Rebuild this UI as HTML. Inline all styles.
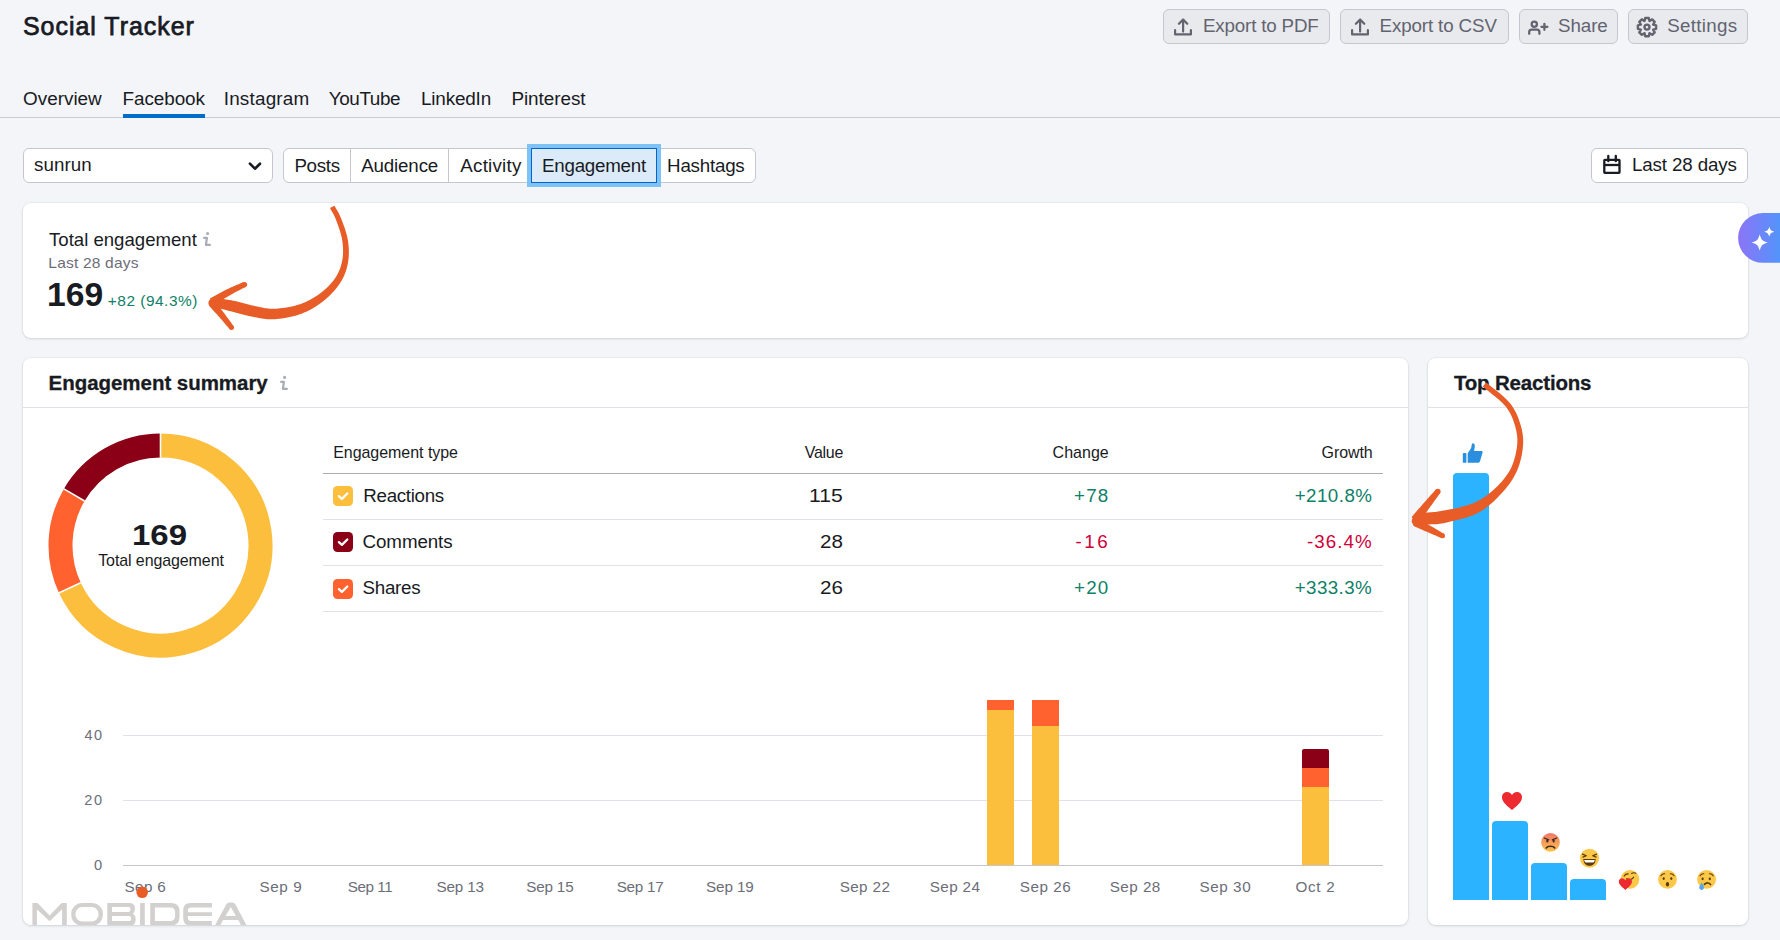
<!DOCTYPE html>
<html><head><meta charset="utf-8"><title>Social Tracker</title>
<style>
html,body{margin:0;padding:0}
body{width:1780px;height:940px;overflow:hidden;background:#f4f5f9;font-family:"Liberation Sans",sans-serif;position:relative}
.t{position:absolute;white-space:nowrap}
.box{position:absolute;box-sizing:border-box;display:block}
svg.ab{position:absolute;left:0;top:0;overflow:visible}
</style></head><body>
<div class="box" style="left:1163px;top:9px;width:167px;height:35px;background:#e9eaee;border:1px solid #c4c7cf;border-radius:6px"></div>
<div class="box" style="left:1340px;top:9px;width:169px;height:35px;background:#e9eaee;border:1px solid #c4c7cf;border-radius:6px"></div>
<div class="box" style="left:1519px;top:9px;width:99px;height:35px;background:#e9eaee;border:1px solid #c4c7cf;border-radius:6px"></div>
<div class="box" style="left:1628px;top:9px;width:120px;height:35px;background:#e9eaee;border:1px solid #c4c7cf;border-radius:6px"></div>
<div class="box" style="left:0px;top:117px;width:1780px;height:1px;background:#c9cbd3"></div>
<div class="box" style="left:123px;top:114px;width:82px;height:4px;background:#006dca"></div>
<div class="box" style="left:23px;top:148px;width:250px;height:35px;background:#fff;border:1px solid #c4c7cf;border-radius:6px"></div>
<div class="box" style="left:283px;top:148px;width:473px;height:35px;background:#fff;border:1px solid #c4c7cf;border-radius:6px"></div>
<div class="box" style="left:350px;top:148px;width:1px;height:35px;background:#c4c7cf"></div>
<div class="box" style="left:448px;top:148px;width:1px;height:35px;background:#c4c7cf"></div>
<div class="box" style="left:527px;top:144px;width:134px;height:43px;background:#7fc3f6"></div>
<div class="box" style="left:531px;top:148px;width:126px;height:35px;background:#dcebfa;border:1px solid #0067cc"></div>
<div class="box" style="left:1591px;top:148px;width:157px;height:35px;background:#fff;border:1px solid #c4c7cf;border-radius:6px"></div>
<div class="box" style="left:23px;top:203px;width:1725px;height:135px;background:#fff;border-radius:8px;box-shadow:0 0 0 1px rgba(25,27,35,0.03),0 1px 3px rgba(25,27,35,0.12)"></div>
<div class="box" style="left:23px;top:358px;width:1385px;height:567px;background:#fff;border-radius:8px;box-shadow:0 0 0 1px rgba(25,27,35,0.03),0 1px 3px rgba(25,27,35,0.12)"></div>
<div class="box" style="left:1428px;top:358px;width:320px;height:567px;background:#fff;border-radius:8px;box-shadow:0 0 0 1px rgba(25,27,35,0.03),0 1px 3px rgba(25,27,35,0.12)"></div>
<div class="box" style="left:23px;top:407px;width:1385px;height:1px;background:#e0e1e9"></div>
<div class="box" style="left:1428px;top:407px;width:320px;height:1px;background:#e0e1e9"></div>
<div class="box" style="left:323px;top:473px;width:1060px;height:1px;background:#a9abb6"></div>
<div class="box" style="left:323px;top:519px;width:1060px;height:1px;background:#e0e1e9"></div>
<div class="box" style="left:323px;top:565px;width:1060px;height:1px;background:#e0e1e9"></div>
<div class="box" style="left:323px;top:611px;width:1060px;height:1px;background:#e0e1e9"></div>
<svg class="box" style="left:333px;top:486px" width="20" height="20" viewBox="0 0 20 20"><rect x="0" y="0" width="20" height="20" rx="4.5" fill="#fcbf3d"/><path d="M5.9 10.1 L8.9 12.9 L14.3 7.5" fill="none" stroke="#fff" stroke-width="2.3" stroke-linecap="round" stroke-linejoin="round"/></svg>
<svg class="box" style="left:333px;top:532px" width="20" height="20" viewBox="0 0 20 20"><rect x="0" y="0" width="20" height="20" rx="4.5" fill="#8b0016"/><path d="M5.9 10.1 L8.9 12.9 L14.3 7.5" fill="none" stroke="#fff" stroke-width="2.3" stroke-linecap="round" stroke-linejoin="round"/></svg>
<svg class="box" style="left:333px;top:579px" width="20" height="20" viewBox="0 0 20 20"><rect x="0" y="0" width="20" height="20" rx="4.5" fill="#ff622e"/><path d="M5.9 10.1 L8.9 12.9 L14.3 7.5" fill="none" stroke="#fff" stroke-width="2.3" stroke-linecap="round" stroke-linejoin="round"/></svg>
<div class="box" style="left:123px;top:735px;width:1260px;height:1px;background:#e0e1e9"></div>
<div class="box" style="left:123px;top:800px;width:1260px;height:1px;background:#e0e1e9"></div>
<div class="box" style="left:123px;top:864.5px;width:1260px;height:1.5px;background:#c4c7cf"></div>
<div class="box" style="left:987px;top:700px;width:27px;height:10px;background:#ff622e;"></div>
<div class="box" style="left:987px;top:710px;width:27px;height:155px;background:#fcbf3d;"></div>
<div class="box" style="left:1032px;top:700px;width:27px;height:26px;background:#ff622e;"></div>
<div class="box" style="left:1032px;top:726px;width:27px;height:139px;background:#fcbf3d;"></div>
<div class="box" style="left:1302px;top:749px;width:27px;height:19px;background:#8b0016;border-radius:2px 2px 0 0;"></div>
<div class="box" style="left:1302px;top:768px;width:27px;height:19px;background:#ff622e;"></div>
<div class="box" style="left:1302px;top:787px;width:27px;height:78px;background:#fcbf3d;"></div>
<div class="box" style="left:1453px;top:473px;width:36px;height:427px;background:#2bb3ff;border-radius:4px 4px 0 0"></div>
<div class="box" style="left:1492px;top:821px;width:36px;height:79px;background:#2bb3ff;border-radius:4px 4px 0 0"></div>
<div class="box" style="left:1531px;top:863px;width:36px;height:37px;background:#2bb3ff;border-radius:4px 4px 0 0"></div>
<div class="box" style="left:1570px;top:879px;width:36px;height:21px;background:#2bb3ff;border-radius:4px 4px 0 0"></div>
<svg class="ab" width="1780" height="940" viewBox="0 0 1780 940">
  <!-- upload icons -->
  <g fill="none" stroke="#62646f" stroke-width="2.2" stroke-linecap="round" stroke-linejoin="round">
    <g transform="translate(1174,18)"><path d="M1.1 12.2V16.4H16.9V12.2"/><path d="M9.1 13.6V1.8"/><path d="M4.9 5.8L9.1 1.6L13.3 5.8"/></g>
    <g transform="translate(1351,18)"><path d="M1.1 12.2V16.4H16.9V12.2"/><path d="M9.1 13.6V1.8"/><path d="M4.9 5.8L9.1 1.6L13.3 5.8"/></g>
    <!-- share person plus -->
    <g transform="translate(1528,19)" stroke-width="2.3"><circle cx="6.3" cy="5.3" r="2.6"/><path d="M1.2 14.8V13.2Q1.2 10.7 3.7 10.7H8.9Q11.4 10.7 11.4 13.2V14.8"/><path d="M16.4 4.8V10.8M13.4 7.8H19.4"/></g>
    <!-- calendar -->
    <g transform="translate(1603,155)" stroke="#191b23" stroke-width="2.3" stroke-linecap="butt" stroke-linejoin="miter"><rect x="1.3" y="4.8" width="15.2" height="13.1" rx="0.6"/><path d="M1.3 10H16.5"/><path d="M5.3 1V6.2M12.8 1V6.2" stroke-linecap="round"/></g>
    <!-- chevron -->
    <path d="M249.9 163.7L254.9 168.7L260 163.7" stroke="#191b23" stroke-width="2.6" stroke-linecap="round" stroke-linejoin="round" fill="none"/>
  </g>
  <!-- gear -->
  <g transform="translate(1647,27.1)" fill="none" stroke="#62646f" stroke-width="2.4" stroke-linejoin="round"><path d="M-2.47 -6.12 L-1.77 -9.13 L1.77 -9.13 L2.47 -6.12 L2.58 -6.08 L5.20 -7.71 L7.71 -5.20 L6.08 -2.58 L6.12 -2.47 L9.13 -1.77 L9.13 1.77 L6.12 2.47 L6.08 2.58 L7.71 5.20 L5.20 7.71 L2.58 6.08 L2.47 6.12 L1.77 9.13 L-1.77 9.13 L-2.47 6.12 L-2.58 6.08 L-5.20 7.71 L-7.71 5.20 L-6.08 2.58 L-6.12 2.47 L-9.13 1.77 L-9.13 -1.77 L-6.12 -2.47 L-6.08 -2.58 L-7.71 -5.20 L-5.20 -7.71 L-2.58 -6.08Z"/><circle cx="0" cy="0" r="2.5"/></g>
  <!-- info icons -->
  <g fill="#a9abb6" stroke="none"><circle cx="207.6" cy="233.5" r="1.55"/><circle cx="284.6" cy="377.4" r="1.55"/></g>
  <g fill="none" stroke="#a9abb6" stroke-width="2.2" stroke-linecap="round" stroke-linejoin="round">
    <path d="M204.1 237.9H206.9L205.9 244.9H209.9"/>
    <path d="M281.1 381.8H283.9L282.9 388.8H286.9"/>
  </g>
  <path d="M160.50 445.50A100.0 100.0 0 1 1 69.89 587.81" fill="none" stroke="#fcbf3d" stroke-width="24"/>
<path d="M69.89 587.81A100.0 100.0 0 0 1 74.21 494.96" fill="none" stroke="#ff622e" stroke-width="24"/>
<path d="M74.21 494.96A100.0 100.0 0 0 1 160.50 445.50" fill="none" stroke="#8b0016" stroke-width="24"/>
<line x1="160.50" y1="457.50" x2="160.50" y2="432.50" stroke="#fff" stroke-width="1.6"/>
<line x1="80.76" y1="582.73" x2="58.11" y2="593.31" stroke="#fff" stroke-width="1.6"/>
<line x1="84.56" y1="501.03" x2="62.99" y2="488.39" stroke="#fff" stroke-width="1.6"/>
<g transform="translate(1462.5,443)" fill="#2a8fdf"><rect x="0.3" y="10" width="3.6" height="9.8" rx="0.9"/><path d="M5.2 10.2C6.8 7.6 8.6 5.8 9 3.4C9.2 1.9 9.3 0.2 10.6 0.2C12.1 0.3 12.6 2.2 12.2 4.2L11.6 8.1H19C19.9 8.1 20.3 8.8 20.1 9.6L17.6 17.9C17.2 19.1 16.3 19.8 14.9 19.8H5.2Z"/></g>
<path transform="translate(1502,792)" d="M10 18C6.2 14.6 0 10.4 0 5.2C0 2.2 2.2 0 5 0C7.2 0 8.8 1.2 10 3C11.2 1.2 12.8 0 15 0C17.8 0 20 2.2 20 5.2C20 10.4 13.8 14.6 10 18Z" fill="#ec2a2f"/>
<defs>
<linearGradient id="ang" x1="0" y1="0" x2="0" y2="1"><stop offset="0" stop-color="#f2766a"/><stop offset="1" stop-color="#fcc24a"/></linearGradient>
<linearGradient id="spk" gradientUnits="userSpaceOnUse" x1="1738" y1="0" x2="1780" y2="0"><stop offset="0" stop-color="#8c74f6"/><stop offset="1" stop-color="#5394fb"/></linearGradient>
</defs>
<g transform="translate(1550.5,842.4)"><circle r="9.3" fill="url(#ang)"/><path d="M-6.2 -4.4L-1.8 -2.6M6.2 -4.4L1.8 -2.6" stroke="#3a2a1a" stroke-width="1.3" stroke-linecap="round"/><ellipse cx="-3.2" cy="-1.4" rx="1.1" ry="1.5" fill="#3a2a1a"/><ellipse cx="3.2" cy="-1.4" rx="1.1" ry="1.5" fill="#3a2a1a"/><path d="M-4.3 5.6C-2.8 3.2 2.8 3.2 4.3 5.6" fill="none" stroke="#3a2a1a" stroke-width="1.5" stroke-linecap="round"/></g>
<g transform="translate(1589.5,858.3)"><circle r="9.5" fill="#fcc84a"/><path d="M-7 -4.2L-3.2 -2.6L-6.6 -1.2M7 -4.2L3.2 -2.6L6.6 -1.2" fill="none" stroke="#5a3a08" stroke-width="1.2" stroke-linecap="round" stroke-linejoin="round"/><path d="M-6.2 0.6C-5.8 5.8 -3 7.4 0 7.4C3 7.4 5.8 5.8 6.2 0.6Z" fill="#5a3a08"/><path d="M-5.3 1.6H5.3C5 3 4.4 3.8 3.6 4.2H-3.6C-4.4 3.8 -5 3 -5.3 1.6Z" fill="#fff"/></g>
<g transform="translate(1630,879.4)"><circle r="9.3" fill="#fcc84a"/><path d="M-5.8 -3.4C-4.8 -5 -3.2 -5.6 -1.8 -5.4M1.6 -6C3 -6.8 4.6 -6.8 5.8 -6.2M-3.4 -0.6C-1.2 0.8 2 0.4 3.6 -2.2" fill="none" stroke="#5a3a08" stroke-width="1.2" stroke-linecap="round"/><path d="M-4.6 10.6C-7.2 8.3 -11.2 5.6 -11.2 2.2C-11.2 0.2 -9.8 -1.2 -8 -1.2C-6.6 -1.2 -5.4 -0.4 -4.6 0.8C-3.8 -0.4 -2.6 -1.2 -1.2 -1.2C0.6 -1.2 2 0.2 2 2.2C2 5.6 -2 8.3 -4.6 10.6Z" fill="#ec2a2f"/></g>
<g transform="translate(1667.5,879.4)"><circle r="9.4" fill="#fcc84a"/><path d="M-6.6 -3.6C-5.6 -5.2 -4.2 -5.8 -2.8 -5.6M6.6 -3.6C5.6 -5.2 4.2 -5.8 2.8 -5.6" fill="none" stroke="#5a3a08" stroke-width="1.1" stroke-linecap="round"/><ellipse cx="-3.8" cy="-0.8" rx="1.1" ry="1.4" fill="#5a3a08"/><ellipse cx="3.8" cy="-0.8" rx="1.1" ry="1.4" fill="#5a3a08"/><ellipse cx="0" cy="4.8" rx="1.6" ry="2.2" fill="#5a3a08"/></g>
<g transform="translate(1706.6,879.4)"><circle r="9.4" fill="#fcc84a"/><path d="M-6.6 -3.6C-5.6 -5.2 -4.2 -5.8 -2.8 -5.6M6.6 -3.6C5.6 -5.2 4.2 -5.8 2.8 -5.6" fill="none" stroke="#5a3a08" stroke-width="1.1" stroke-linecap="round"/><ellipse cx="-4" cy="-0.6" rx="1.1" ry="1.4" fill="#5a3a08"/><ellipse cx="3.2" cy="-0.6" rx="1.1" ry="1.4" fill="#5a3a08"/><path d="M-2.2 5C-0.4 3 2.6 3 4 5.2" fill="none" stroke="#5a3a08" stroke-width="1.6" stroke-linecap="round"/><path d="M-4.8 3.2C-5.6 5 -7.4 6.4 -7.4 8.2C-7.4 9.6 -6.2 10.6 -5 10.6C-3.6 10.6 -2.6 9.6 -2.6 8.2C-2.6 6.4 -4 5 -4.8 3.2Z" fill="#5aa6ea"/></g>
<path d="M1763 213H1790V262.8H1763A24.9 24.9 0 0 1 1763 213Z" fill="url(#spk)"/>
<path d="M1759.7 234.4C1761.806 240.394 1761.806 240.394 1767.8 242.5C1761.806 244.606 1761.806 244.606 1759.7 250.6C1757.594 244.606 1757.594 244.606 1751.6000000000001 242.5C1757.594 240.394 1757.594 240.394 1759.7 234.4Z" fill="#fff"/>
<path d="M1769.3 226.8C1770.6 230.5 1770.6 230.5 1774.3 231.8C1770.6 233.10000000000002 1770.6 233.10000000000002 1769.3 236.8C1768.0 233.10000000000002 1768.0 233.10000000000002 1764.3 231.8C1768.0 230.5 1768.0 230.5 1769.3 226.8Z" fill="#fff"/>
</svg>
<div class="t" style="left:23.00px;top:14.40px;font-size:24.93px;line-height:24.93px;font-weight:400;color:#191b23;letter-spacing:1.0px;-webkit-text-stroke:0.75px #191b23">Social Tracker</div>
<div class="t" style="left:23.00px;top:90.00px;font-size:18.9px;line-height:18.9px;font-weight:400;color:#191b23;letter-spacing:0.0px">Overview</div>
<div class="t" style="left:122.50px;top:90.00px;font-size:18.9px;line-height:18.9px;font-weight:400;color:#191b23;letter-spacing:-0.071px">Facebook</div>
<div class="t" style="left:223.70px;top:90.00px;font-size:18.9px;line-height:18.9px;font-weight:400;color:#191b23;letter-spacing:0.2px">Instagram</div>
<div class="t" style="left:328.70px;top:90.00px;font-size:18.9px;line-height:18.9px;font-weight:400;color:#191b23;letter-spacing:-0.383px">YouTube</div>
<div class="t" style="left:420.90px;top:90.00px;font-size:18.9px;line-height:18.9px;font-weight:400;color:#191b23;letter-spacing:-0.157px">LinkedIn</div>
<div class="t" style="left:511.40px;top:90.00px;font-size:18.9px;line-height:18.9px;font-weight:400;color:#191b23;letter-spacing:-0.05px">Pinterest</div>
<div class="t" style="left:1203.00px;top:17.00px;font-size:18.75px;line-height:18.75px;font-weight:400;color:#62646f;letter-spacing:-0.167px">Export to PDF</div>
<div class="t" style="left:1379.50px;top:17.00px;font-size:18.75px;line-height:18.75px;font-weight:400;color:#62646f;letter-spacing:-0.117px">Export to CSV</div>
<div class="t" style="left:1558.00px;top:17.00px;font-size:18.75px;line-height:18.75px;font-weight:400;color:#62646f;letter-spacing:-0.075px">Share</div>
<div class="t" style="left:1667.30px;top:17.00px;font-size:18.75px;line-height:18.75px;font-weight:400;color:#62646f;letter-spacing:0.3px">Settings</div>
<div class="t" style="left:34.00px;top:156.00px;font-size:18.75px;line-height:18.75px;font-weight:400;color:#191b23;letter-spacing:0.06px">sunrun</div>
<div class="t" style="left:294.40px;top:157.00px;font-size:18.75px;line-height:18.75px;font-weight:400;color:#191b23;letter-spacing:-0.3px">Posts</div>
<div class="t" style="left:361.20px;top:157.00px;font-size:18.75px;line-height:18.75px;font-weight:400;color:#191b23;letter-spacing:-0.157px">Audience</div>
<div class="t" style="left:460.30px;top:157.00px;font-size:18.75px;line-height:18.75px;font-weight:400;color:#191b23;letter-spacing:0.229px">Activity</div>
<div class="t" style="left:542.00px;top:157.00px;font-size:18.75px;line-height:18.75px;font-weight:400;color:#191b23;letter-spacing:-0.244px">Engagement</div>
<div class="t" style="left:667.10px;top:157.00px;font-size:18.75px;line-height:18.75px;font-weight:400;color:#191b23;letter-spacing:-0.229px">Hashtags</div>
<div class="t" style="left:1632.00px;top:156.00px;font-size:18.75px;line-height:18.75px;font-weight:400;color:#191b23;letter-spacing:-0.136px">Last 28 days</div>
<div class="t" style="left:49.00px;top:231.00px;font-size:18.6px;line-height:18.6px;font-weight:400;color:#191b23;letter-spacing:0.0px">Total engagement</div>
<div class="t" style="left:48.30px;top:255.00px;font-size:15.55px;line-height:15.55px;font-weight:400;color:#6c6e79;letter-spacing:0.182px">Last 28 days</div>
<div class="t" style="left:46.94px;top:279.00px;font-size:32.7px;line-height:32.7px;font-weight:700;color:#191b23;letter-spacing:0px;transform:scaleX(1.0294);transform-origin:0 0">169</div>
<div class="t" style="left:107.80px;top:292.60px;font-size:15.41px;line-height:15.41px;font-weight:400;color:#0e8068;letter-spacing:0.52px">+82 (94.3%)</div>
<div class="t" style="left:48.60px;top:373.00px;font-size:20.49px;line-height:20.49px;font-weight:700;color:#191b23;letter-spacing:-0.035px;-webkit-text-stroke:0.3px #191b23">Engagement summary</div>
<div class="t" style="left:1453.90px;top:373.00px;font-size:20.49px;line-height:20.49px;font-weight:700;color:#191b23;letter-spacing:-0.167px;-webkit-text-stroke:0.3px #191b23">Top Reactions</div>
<div class="t" style="left:132.27px;top:520.00px;font-size:29.65px;line-height:29.65px;font-weight:700;color:#191b23;letter-spacing:0px;transform:scaleX(1.1128);transform-origin:0 0">169</div>
<div class="t" style="left:98.20px;top:553.20px;font-size:15.99px;line-height:15.99px;font-weight:400;color:#191b23;letter-spacing:-0.093px">Total engagement</div>
<div class="t" style="left:333.20px;top:445.00px;font-size:15.99px;line-height:15.99px;font-weight:400;color:#191b23;letter-spacing:-0.036px">Engagement type</div>
<div class="t" style="left:804.70px;top:445.00px;font-size:15.99px;line-height:15.99px;font-weight:400;color:#191b23;letter-spacing:-0.25px">Value</div>
<div class="t" style="left:1052.60px;top:445.00px;font-size:15.99px;line-height:15.99px;font-weight:400;color:#191b23;letter-spacing:0.02px">Change</div>
<div class="t" style="left:1321.60px;top:445.00px;font-size:15.99px;line-height:15.99px;font-weight:400;color:#191b23;letter-spacing:-0.08px">Growth</div>
<div class="t" style="left:363.30px;top:486.60px;font-size:18.75px;line-height:18.75px;font-weight:400;color:#191b23;letter-spacing:-0.312px">Reactions</div>
<div class="t" style="left:809.38px;top:486.60px;font-size:18.75px;line-height:18.75px;font-weight:400;color:#191b23;letter-spacing:0px;transform:scaleX(1.1250);transform-origin:0 0">115</div>
<div class="t" style="left:1073.90px;top:486.60px;font-size:18.75px;line-height:18.75px;font-weight:400;color:#0e8068;letter-spacing:1.3px">+78</div>
<div class="t" style="left:1294.70px;top:486.60px;font-size:18.75px;line-height:18.75px;font-weight:400;color:#0e8068;letter-spacing:0.45px">+210.8%</div>
<div class="t" style="left:362.60px;top:532.60px;font-size:18.75px;line-height:18.75px;font-weight:400;color:#191b23;letter-spacing:-0.1px">Comments</div>
<div class="t" style="left:820.20px;top:532.60px;font-size:18.75px;line-height:18.75px;font-weight:400;color:#191b23;letter-spacing:0px;transform:scaleX(1.1000);transform-origin:0 0">28</div>
<div class="t" style="left:1075.60px;top:532.60px;font-size:18.75px;line-height:18.75px;font-weight:400;color:#d1003a;letter-spacing:2.45px">-16</div>
<div class="t" style="left:1307.10px;top:532.60px;font-size:18.75px;line-height:18.75px;font-weight:400;color:#d1003a;letter-spacing:1.02px">-36.4%</div>
<div class="t" style="left:362.60px;top:578.60px;font-size:18.75px;line-height:18.75px;font-weight:400;color:#191b23;letter-spacing:-0.28px">Shares</div>
<div class="t" style="left:820.20px;top:578.60px;font-size:18.75px;line-height:18.75px;font-weight:400;color:#191b23;letter-spacing:0px;transform:scaleX(1.1000);transform-origin:0 0">26</div>
<div class="t" style="left:1073.90px;top:578.60px;font-size:18.75px;line-height:18.75px;font-weight:400;color:#0e8068;letter-spacing:1.3px">+20</div>
<div class="t" style="left:1294.70px;top:578.60px;font-size:18.75px;line-height:18.75px;font-weight:400;color:#0e8068;letter-spacing:0.417px">+333.3%</div>
<div class="t" style="left:84.60px;top:728.30px;font-size:14.53px;line-height:14.53px;font-weight:400;color:#6c6e79;letter-spacing:1.4px">40</div>
<div class="t" style="left:84.20px;top:793.00px;font-size:14.53px;line-height:14.53px;font-weight:400;color:#6c6e79;letter-spacing:1.8px">20</div>
<div class="t" style="left:93.90px;top:857.50px;font-size:14.53px;line-height:14.53px;font-weight:400;color:#6c6e79;letter-spacing:0px;transform:scaleX(1.0125);transform-origin:0 0">0</div>
<div class="t" style="left:124.60px;top:879.00px;font-size:15.26px;line-height:15.26px;font-weight:400;color:#6c6e79;letter-spacing:0.35px">Sep 6</div>
<div class="t" style="left:259.40px;top:879.00px;font-size:15.26px;line-height:15.26px;font-weight:400;color:#6c6e79;letter-spacing:0.6px">Sep 9</div>
<div class="t" style="left:347.70px;top:879.00px;font-size:15.26px;line-height:15.26px;font-weight:400;color:#6c6e79;letter-spacing:-0.44px">Sep 11</div>
<div class="t" style="left:436.40px;top:879.00px;font-size:15.26px;line-height:15.26px;font-weight:400;color:#6c6e79;letter-spacing:-0.14px">Sep 13</div>
<div class="t" style="left:526.20px;top:879.00px;font-size:15.26px;line-height:15.26px;font-weight:400;color:#6c6e79;letter-spacing:-0.18px">Sep 15</div>
<div class="t" style="left:616.70px;top:879.00px;font-size:15.26px;line-height:15.26px;font-weight:400;color:#6c6e79;letter-spacing:-0.24px">Sep 17</div>
<div class="t" style="left:706.00px;top:879.00px;font-size:15.26px;line-height:15.26px;font-weight:400;color:#6c6e79;letter-spacing:-0.12px">Sep 19</div>
<div class="t" style="left:839.70px;top:879.00px;font-size:15.26px;line-height:15.26px;font-weight:400;color:#6c6e79;letter-spacing:0.38px">Sep 22</div>
<div class="t" style="left:929.80px;top:879.00px;font-size:15.26px;line-height:15.26px;font-weight:400;color:#6c6e79;letter-spacing:0.36px">Sep 24</div>
<div class="t" style="left:1019.80px;top:879.00px;font-size:15.26px;line-height:15.26px;font-weight:400;color:#6c6e79;letter-spacing:0.5px">Sep 26</div>
<div class="t" style="left:1109.70px;top:879.00px;font-size:15.26px;line-height:15.26px;font-weight:400;color:#6c6e79;letter-spacing:0.46px">Sep 28</div>
<div class="t" style="left:1199.40px;top:879.00px;font-size:15.26px;line-height:15.26px;font-weight:400;color:#6c6e79;letter-spacing:0.58px">Sep 30</div>
<div class="t" style="left:1295.50px;top:879.00px;font-size:15.26px;line-height:15.26px;font-weight:400;color:#6c6e79;letter-spacing:0.675px">Oct 2</div>
<svg class="ab" width="1780" height="940" viewBox="0 0 1780 940"><clipPath id="wmclip"><rect x="0" y="880" width="400" height="45.3"/></clipPath>
<g fill="#d3d1cf" fill-rule="evenodd" clip-path="url(#wmclip)">
<path d="M32.4 925.5V903.1H37.6L49.6 915.6L61.6 903.1H66.8V925.5H62.1V909.3L49.6 921.3L36.9 909.3V925.5Z"/>
<path d="M81.7 903.1H92.4A10.5 10.5 0 0 1 102.9 913.6V915A10.5 10.5 0 0 1 92.4 925.5H81.7A10.5 10.5 0 0 1 71.2 915V913.6A10.5 10.5 0 0 1 81.7 903.1ZM82.1 907H91.9A6.6 6.6 0 0 1 98.5 913.6V914.8A6.6 6.6 0 0 1 91.9 921.4H82.1A6.6 6.6 0 0 1 75.5 914.8V913.6A6.6 6.6 0 0 1 82.1 907Z"/>
<path d="M107.3 903.1H129.4Q134.9 903.1 134.9 908.4V909.2Q134.9 912 132.9 913.8Q135.6 915.4 135.6 918.6V919.9Q135.6 925.5 130.1 925.5H107.3ZM112 907.1H128.9Q130.5 907.1 130.5 909.3Q130.5 911.9 128.9 911.9H112ZM112 915.9H129.4Q131.2 915.9 131.2 918.4Q131.2 921 129.4 921H112Z"/>
<rect x="140.1" y="903.1" width="4.7" height="22.4"/>
<path d="M150.2 903.1H171.2Q179.5 903.1 179.5 911.4V917.2Q179.5 925.5 171.2 925.5H150.2ZM154.9 907.5H170.3Q175.1 907.5 175.1 912.3V916.2Q175.1 921 170.3 921H154.9Z"/>
<path d="M211.9 903.1H190.4Q183.2 903.1 183.2 910.3V918.3Q183.2 925.5 190.4 925.5H211.9V921H191.2Q187.9 921 187.9 917.7V915.9H211.9V912.2H187.9V910.8Q187.9 907.5 191.2 907.5H211.9Z"/>
<path d="M214.9 925.5L226.2 904.6Q227.2 902.6 229.5 902.6H232.2Q234.5 902.6 235.5 904.6L246.6 925.5H241.2L238.3 920H223L220.2 925.5ZM225.5 915.9H235.9L230.8 907.1Z"/>
</g>
<path fill="#e85d27" d="M329.99 207.97 L330.52 208.98 L331.06 209.97 L331.58 210.91 L332.10 211.82 L332.61 212.71 L333.12 213.60 L333.61 214.51 L334.10 215.46 L334.59 216.45 L335.08 217.52 L335.58 218.67 L336.08 219.95 L336.61 221.38 L337.18 222.92 L337.77 224.55 L338.38 226.25 L338.98 228.00 L339.57 229.80 L340.13 231.61 L340.67 233.44 L341.15 235.25 L341.59 237.03 L341.95 238.77 L342.24 240.46 L342.47 242.14 L342.67 243.85 L342.83 245.56 L342.95 247.27 L343.02 248.97 L343.06 250.67 L343.04 252.36 L342.98 254.03 L342.88 255.68 L342.72 257.31 L342.51 258.91 L342.24 260.49 L341.91 262.06 L341.54 263.61 L341.13 265.15 L340.67 266.66 L340.17 268.16 L339.61 269.64 L339.01 271.10 L338.35 272.54 L337.64 273.97 L336.87 275.38 L336.04 276.78 L335.14 278.16 L334.16 279.53 L333.10 280.91 L331.97 282.30 L330.77 283.68 L329.52 285.04 L328.20 286.40 L326.84 287.73 L325.44 289.03 L324.01 290.30 L322.54 291.52 L321.06 292.71 L319.55 293.84 L318.00 294.93 L316.41 295.99 L314.79 297.03 L313.13 298.04 L311.43 299.01 L309.71 299.94 L307.96 300.83 L306.18 301.68 L304.39 302.47 L302.57 303.21 L300.74 303.90 L298.90 304.53 L297.02 305.12 L295.04 305.68 L292.99 306.20 L290.89 306.67 L288.75 307.10 L286.59 307.49 L284.44 307.82 L282.31 308.11 L280.22 308.35 L278.19 308.54 L276.25 308.67 L274.42 308.76 L272.74 308.80 L271.16 308.77 L269.64 308.69 L268.17 308.56 L266.71 308.37 L265.26 308.15 L263.79 307.89 L262.28 307.59 L260.72 307.26 L259.10 306.92 L257.40 306.56 L255.66 306.20 L253.93 305.86 L252.17 305.47 L250.36 305.04 L248.51 304.58 L246.62 304.09 L244.71 303.59 L242.78 303.07 L240.85 302.55 L238.91 302.04 L236.99 301.55 L235.09 301.07 L233.22 300.64 L231.40 300.32 L229.62 300.02 L227.87 299.74 L226.15 299.48 L224.46 299.23 L222.79 298.99 L221.13 298.76 L219.48 298.53 L217.83 298.30 L216.19 298.07 L214.54 297.83 L212.87 297.59 L211.13 306.41 L212.78 306.83 L214.42 307.23 L216.05 307.63 L217.66 308.02 L219.28 308.41 L220.89 308.81 L222.50 309.21 L224.13 309.61 L225.76 310.03 L227.41 310.46 L229.09 310.90 L230.78 311.36 L232.51 311.77 L234.30 312.21 L236.14 312.68 L238.02 313.18 L239.94 313.69 L241.88 314.21 L243.84 314.73 L245.80 315.24 L247.77 315.73 L249.72 316.20 L251.67 316.62 L253.54 317.00 L255.29 317.31 L256.96 317.62 L258.61 317.93 L260.27 318.23 L261.94 318.52 L263.64 318.78 L265.38 319.00 L267.17 319.18 L269.02 319.30 L270.94 319.36 L272.93 319.34 L274.98 319.24 L277.08 319.06 L279.25 318.82 L281.48 318.52 L283.77 318.17 L286.09 317.77 L288.43 317.31 L290.78 316.81 L293.12 316.25 L295.44 315.63 L297.72 314.97 L299.95 314.25 L302.10 313.47 L304.18 312.62 L306.22 311.71 L308.23 310.75 L310.19 309.73 L312.13 308.67 L314.02 307.56 L315.87 306.41 L317.67 305.22 L319.44 304.00 L321.15 302.75 L322.83 301.47 L324.45 300.16 L326.05 298.82 L327.63 297.43 L329.18 296.00 L330.69 294.53 L332.16 293.02 L333.58 291.48 L334.96 289.91 L336.27 288.32 L337.52 286.72 L338.71 285.10 L339.82 283.47 L340.86 281.84 L341.83 280.21 L342.72 278.56 L343.55 276.91 L344.30 275.23 L344.99 273.55 L345.61 271.86 L346.18 270.16 L346.68 268.45 L347.12 266.73 L347.52 265.00 L347.86 263.26 L348.16 261.51 L348.42 259.73 L348.62 257.92 L348.76 256.10 L348.85 254.27 L348.88 252.43 L348.86 250.58 L348.79 248.73 L348.67 246.88 L348.50 245.04 L348.30 243.20 L348.05 241.37 L347.76 239.54 L347.41 237.68 L346.97 235.76 L346.47 233.84 L345.92 231.91 L345.32 230.00 L344.70 228.10 L344.05 226.25 L343.40 224.45 L342.74 222.71 L342.11 221.06 L341.50 219.51 L340.92 218.05 L340.36 216.68 L339.79 215.40 L339.23 214.21 L338.67 213.11 L338.11 212.07 L337.56 211.10 L337.02 210.17 L336.48 209.27 L335.96 208.38 L335.44 207.50 L334.93 206.59 L334.41 205.63Z"/>
<path fill="#e85d27" d="M214.05 305.43 L215.36 304.58 L216.68 303.72 L217.98 302.85 L219.28 301.99 L220.57 301.13 L221.86 300.28 L223.15 299.43 L224.43 298.59 L225.71 297.77 L227.00 296.96 L228.28 296.18 L229.56 295.41 L230.86 294.66 L232.17 293.93 L233.49 293.22 L234.82 292.51 L236.15 291.81 L237.50 291.12 L238.85 290.43 L240.21 289.74 L241.57 289.05 L242.94 288.35 L244.31 287.64 L245.67 286.93 L243.33 282.07 L241.94 282.68 L240.55 283.28 L239.15 283.88 L237.75 284.48 L236.35 285.09 L234.94 285.69 L233.53 286.31 L232.11 286.93 L230.69 287.57 L229.27 288.23 L227.85 288.90 L226.44 289.59 L225.02 290.30 L223.61 291.03 L222.21 291.77 L220.83 292.52 L219.45 293.27 L218.07 294.04 L216.71 294.80 L215.35 295.57 L213.99 296.33 L212.64 297.08 L211.30 297.83 L209.95 298.57Z"/><path fill="#e85d27" d="M209.12 305.90 L210.00 306.87 L210.88 307.84 L211.76 308.81 L212.65 309.77 L213.53 310.74 L214.41 311.70 L215.28 312.66 L216.16 313.62 L217.02 314.58 L217.89 315.54 L218.74 316.50 L219.59 317.45 L220.43 318.41 L221.27 319.37 L222.10 320.34 L222.93 321.30 L223.76 322.27 L224.58 323.23 L225.40 324.20 L226.23 325.17 L227.05 326.14 L227.88 327.11 L228.71 328.08 L229.54 329.05 L233.46 325.95 L232.71 324.92 L231.97 323.89 L231.22 322.86 L230.48 321.83 L229.73 320.80 L228.98 319.77 L228.23 318.73 L227.48 317.70 L226.72 316.66 L225.95 315.63 L225.18 314.59 L224.41 313.55 L223.62 312.50 L222.84 311.46 L222.05 310.42 L221.25 309.38 L220.45 308.34 L219.66 307.30 L218.86 306.26 L218.06 305.23 L217.26 304.19 L216.46 303.16 L215.67 302.13 L214.88 301.10Z"/><circle cx="244.5" cy="284.5" r="2.6" fill="#e85d27"/><circle cx="231.5" cy="327.5" r="2.5" fill="#e85d27"/><circle cx="213" cy="303" r="4.6" fill="#e85d27"/>
<path fill="#e85d27" d="M1482.75 386.56 L1484.73 388.24 L1486.78 389.92 L1488.87 391.60 L1490.96 393.26 L1493.05 394.92 L1495.10 396.56 L1497.09 398.20 L1499.01 399.83 L1500.82 401.45 L1502.51 403.06 L1504.04 404.64 L1505.42 406.22 L1506.66 407.81 L1507.79 409.41 L1508.82 411.01 L1509.76 412.61 L1510.62 414.22 L1511.40 415.84 L1512.12 417.46 L1512.78 419.10 L1513.40 420.75 L1513.97 422.42 L1514.51 424.10 L1515.02 425.80 L1515.49 427.48 L1515.91 429.14 L1516.28 430.78 L1516.59 432.42 L1516.86 434.05 L1517.07 435.69 L1517.22 437.34 L1517.32 439.01 L1517.35 440.71 L1517.32 442.43 L1517.23 444.20 L1517.06 446.01 L1516.82 447.90 L1516.51 449.86 L1516.14 451.87 L1515.72 453.92 L1515.23 456.00 L1514.67 458.09 L1514.06 460.17 L1513.38 462.23 L1512.64 464.26 L1511.84 466.24 L1510.98 468.16 L1510.06 470.00 L1509.03 471.79 L1507.90 473.57 L1506.70 475.34 L1505.41 477.09 L1504.07 478.82 L1502.66 480.53 L1501.20 482.21 L1499.69 483.86 L1498.14 485.47 L1496.57 487.04 L1494.98 488.56 L1493.36 490.04 L1491.70 491.45 L1490.02 492.83 L1488.34 494.16 L1486.64 495.45 L1484.93 496.68 L1483.18 497.86 L1481.40 498.99 L1479.58 500.06 L1477.72 501.08 L1475.80 502.04 L1473.81 502.94 L1471.78 503.77 L1469.64 504.58 L1467.27 505.37 L1464.69 506.12 L1461.96 506.83 L1459.15 507.50 L1456.29 508.13 L1453.45 508.71 L1450.66 509.25 L1447.98 509.75 L1445.45 510.20 L1443.11 510.61 L1441.05 510.98 L1439.37 511.33 L1437.98 511.59 L1436.77 511.78 L1435.72 511.92 L1434.78 512.01 L1433.90 512.07 L1433.02 512.12 L1432.11 512.16 L1431.12 512.21 L1430.03 512.28 L1428.85 512.39 L1427.60 512.54 L1426.39 512.78 L1425.24 513.02 L1424.10 513.27 L1422.97 513.52 L1421.86 513.77 L1420.75 514.03 L1419.66 514.29 L1418.57 514.54 L1417.49 514.80 L1416.41 515.06 L1415.33 515.31 L1414.25 515.56 L1415.75 525.44 L1416.88 525.36 L1418.01 525.26 L1419.13 525.17 L1420.25 525.08 L1421.35 524.99 L1422.46 524.90 L1423.56 524.81 L1424.66 524.73 L1425.75 524.65 L1426.85 524.58 L1427.94 524.51 L1429.00 524.46 L1429.93 524.38 L1430.74 524.34 L1431.55 524.33 L1432.41 524.33 L1433.35 524.33 L1434.40 524.31 L1435.57 524.28 L1436.87 524.20 L1438.31 524.06 L1439.89 523.86 L1441.65 523.58 L1443.55 523.22 L1445.60 522.73 L1447.89 522.20 L1450.43 521.62 L1453.15 520.99 L1456.02 520.31 L1458.98 519.57 L1461.99 518.78 L1465.00 517.92 L1467.97 517.01 L1470.86 516.03 L1473.63 514.97 L1476.22 513.83 L1478.59 512.59 L1480.83 511.29 L1482.97 509.94 L1485.02 508.54 L1486.99 507.08 L1488.88 505.59 L1490.70 504.05 L1492.46 502.49 L1494.16 500.89 L1495.82 499.27 L1497.44 497.63 L1499.04 495.96 L1500.67 494.28 L1502.28 492.54 L1503.87 490.76 L1505.44 488.93 L1506.96 487.06 L1508.44 485.14 L1509.87 483.20 L1511.24 481.21 L1512.54 479.20 L1513.76 477.16 L1514.90 475.09 L1515.94 473.00 L1516.93 470.88 L1517.84 468.70 L1518.67 466.48 L1519.43 464.23 L1520.11 461.96 L1520.71 459.69 L1521.25 457.42 L1521.72 455.17 L1522.12 452.95 L1522.46 450.78 L1522.73 448.65 L1522.94 446.59 L1523.09 444.58 L1523.17 442.60 L1523.18 440.66 L1523.11 438.75 L1522.98 436.87 L1522.78 435.02 L1522.52 433.19 L1522.20 431.37 L1521.82 429.57 L1521.39 427.78 L1520.91 425.99 L1520.38 424.20 L1519.83 422.42 L1519.24 420.64 L1518.61 418.86 L1517.93 417.08 L1517.19 415.29 L1516.38 413.50 L1515.49 411.71 L1514.52 409.92 L1513.45 408.13 L1512.28 406.35 L1510.99 404.56 L1509.58 402.78 L1508.02 400.99 L1506.31 399.22 L1504.48 397.48 L1502.56 395.76 L1500.56 394.06 L1498.50 392.37 L1496.42 390.70 L1494.32 389.03 L1492.23 387.38 L1490.18 385.73 L1488.19 384.09 L1486.25 382.44Z"/>
<path fill="#e85d27" d="M1418.51 522.81 L1419.47 521.52 L1420.43 520.22 L1421.40 518.91 L1422.36 517.60 L1423.33 516.29 L1424.30 514.98 L1425.26 513.68 L1426.21 512.39 L1427.16 511.10 L1428.10 509.83 L1429.02 508.58 L1429.93 507.34 L1430.81 506.12 L1431.67 504.91 L1432.53 503.71 L1433.37 502.53 L1434.20 501.36 L1435.03 500.20 L1435.86 499.05 L1436.68 497.89 L1437.50 496.74 L1438.32 495.58 L1439.15 494.42 L1439.99 493.25 L1435.61 489.75 L1434.66 490.82 L1433.70 491.88 L1432.76 492.94 L1431.81 494.00 L1430.87 495.05 L1429.92 496.11 L1428.97 497.17 L1428.01 498.24 L1427.04 499.33 L1426.06 500.42 L1425.08 501.53 L1424.07 502.66 L1423.06 503.82 L1422.04 504.99 L1421.01 506.18 L1419.97 507.39 L1418.91 508.61 L1417.85 509.83 L1416.79 511.06 L1415.73 512.29 L1414.66 513.52 L1413.60 514.75 L1412.54 515.97 L1411.49 517.19Z"/><path fill="#e85d27" d="M1413.10 525.80 L1414.39 526.37 L1415.69 526.94 L1417.00 527.52 L1418.32 528.09 L1419.64 528.67 L1420.95 529.25 L1422.25 529.82 L1423.54 530.38 L1424.81 530.94 L1426.06 531.49 L1427.28 532.02 L1428.48 532.54 L1429.64 533.04 L1430.77 533.52 L1431.87 534.00 L1432.96 534.46 L1434.02 534.91 L1435.08 535.36 L1436.12 535.80 L1437.16 536.24 L1438.21 536.69 L1439.25 537.13 L1440.31 537.58 L1441.37 538.03 L1443.63 533.57 L1442.63 532.98 L1441.64 532.40 L1440.66 531.82 L1439.69 531.24 L1438.71 530.67 L1437.74 530.09 L1436.75 529.51 L1435.75 528.92 L1434.73 528.32 L1433.69 527.72 L1432.62 527.10 L1431.52 526.46 L1430.39 525.81 L1429.23 525.15 L1428.04 524.48 L1426.83 523.79 L1425.61 523.10 L1424.37 522.40 L1423.12 521.70 L1421.87 521.00 L1420.61 520.29 L1419.37 519.59 L1418.13 518.89 L1416.90 518.20Z"/><circle cx="1437.8" cy="491.5" r="2.8" fill="#e85d27"/><circle cx="1442.5" cy="535.8" r="2.5" fill="#e85d27"/><circle cx="1416.5" cy="521" r="4.8" fill="#e85d27"/>
<circle cx="142.2" cy="892.3" r="5.8" fill="#e85d27"/></svg>
</body></html>
